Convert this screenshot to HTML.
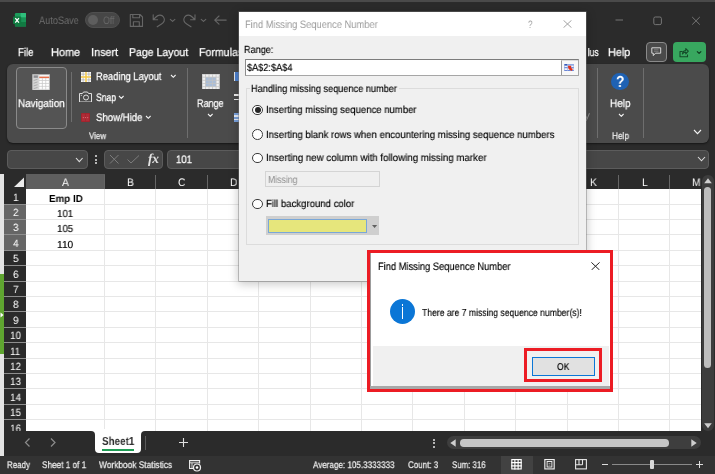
<!DOCTYPE html>
<html><head><meta charset="utf-8"><title>Find Missing Sequence Number</title>
<style>
*{box-sizing:border-box;margin:0;padding:0}
html,body{width:715px;height:474px;overflow:hidden;background:#2b2b2b}
body{position:relative;font-family:"Liberation Sans",sans-serif;color:#fff}
.a{position:absolute;display:block}
.t{position:absolute;white-space:nowrap;line-height:1;transform-origin:0 0;will-change:transform;text-rendering:geometricPrecision}
.w{-webkit-text-stroke:.25px currentColor}
.k{-webkit-text-stroke:.15px currentColor}
</style></head><body>
<div class="a" style="left:0px;top:0px;width:715px;height:1.8px;background:#4a4a4a"></div>
<svg class="a" style="left:12.900px;top:13.400px" width="13.4" height="13.6" viewBox="0 0 13.4 13.6">
 <rect x="1.9" y="0" width="11.5" height="13.6" rx="1.2" fill="#1d9c5c"/>
 <path d="M7.6 0H12.200A1.2 1.2 0 0 1 13.4 1.200V4.600H7.600Z" fill="#2fbf7c"/>
 <rect x="7.6" y="4.6" width="5.8" height="4.5" fill="#1a9457"/>
 <path d="M1.9 9.100H13.400V12.400A1.2 1.2 0 0 1 12.2 13.600H3.100A1.2 1.2 0 0 1 1.9 12.400Z" fill="#117a42"/>
 <rect x="0" y="3.6" width="8.2" height="7.5" rx=".8" fill="#0f7a40"/>
 <path d="M2.3 5.1 L5.9 9.6 M5.9 5.1 L2.3 9.6" stroke="#fff" stroke-width="1.3"/>
</svg>
<div class="t" style="left:39.40px;top:16px;font-size:10.8px;color:#6e6e6e;transform:scaleX(0.8498);">AutoSave</div>
<div class="a" style="left:84.6px;top:12.4px;width:35px;height:15.6px;border-radius:8px;background:#464646;border:1px solid #4f4f4f"></div>
<div class="a" style="left:88px;top:15.2px;width:10px;height:10px;border-radius:5px;background:#5e5e5e"></div>
<div class="t" style="left:102.60px;top:16px;font-size:10.8px;color:#6a6a6a;transform:scaleX(0.8024);">Off</div>
<svg class="a" style="left:128px;top:12px" width="102" height="17" viewBox="0 0 102 17" fill="none" stroke="#666" stroke-width="1.1" stroke-linecap="round" stroke-linejoin="round">
 <path d="M2.3 2.5 H12 L14.5 5 V14.4 H2.3 Z M4.8 2.5 V5.8 H11.6 V2.5 M5.4 14.4 V9.8 H11.3 V14.4"/>
 <path d="M25.2 2.7 V7.8 H29.6 M25.5 7.5 L28 5 C30 3 33.5 2 35.5 5 C37.5 8 36 10.5 33.5 12 L29.2 14.8"/>
 <path d="M42.3 7.3 L44.6 9.4 L46.9 7.3"/>
 <path d="M67 2.7 V7.8 H62.6 M66.7 7.5 L64.2 5 C62.2 3 58.7 2 56.7 5 C54.7 8 56.2 10.5 58.7 12 L63 14.8"/>
 <path d="M73.2 7.3 L75.5 9.4 L77.8 7.3"/>
 <path d="M86.7 8.1 H98.2 M91 4 L86.7 8.1 L91 12.2"/>
</svg>
<svg class="a" style="left:610px;top:10px" width="100" height="22" viewBox="0 0 100 22" fill="none" stroke="#767676" stroke-width="1">
 <path d="M5.5 10 H13"/>
 <rect x="43.8" y="7" width="7.6" height="7.6" rx="1.5"/>
 <path d="M82.2 7 L89.8 14.6 M89.8 7 L82.2 14.6"/>
</svg>
<div class="t w" style="left:17.60px;top:48px;font-size:11.3px;color:#fff;transform:scaleX(0.8458);">File</div>
<div class="t w" style="left:51.40px;top:48px;font-size:11.3px;color:#fff;transform:scaleX(0.9687);">Home</div>
<div class="t w" style="left:91.20px;top:48px;font-size:11.3px;color:#fff;transform:scaleX(0.9625);">Insert</div>
<div class="t w" style="left:129.40px;top:48px;font-size:11.3px;color:#fff;transform:scaleX(0.9329);">Page Layout</div>
<div class="t w" style="left:199.40px;top:48px;font-size:11.3px;color:#fff;transform:scaleX(0.9364);">Formulas</div>
<div class="t w" style="left:582.20px;top:48px;font-size:11.3px;color:#fff;transform:scaleX(0.7643);clip-path:inset(0 0 0 33%);">Plus</div>
<div class="t w" style="left:608.40px;top:48px;font-size:11.3px;color:#fff;transform:scaleX(0.9552);">Help</div>
<div class="a" style="left:646px;top:42px;width:21px;height:20px;border:1px solid #8a8a8a;border-radius:4px;background:#4a4a4a"></div>
<svg class="a" style="left:651px;top:46.800px" width="10.5" height="9.5" viewBox="0 0 10.5 9.5" fill="none" stroke="#e6e6e6" stroke-width=".900" stroke-linejoin="round"><path d="M.8 .8 H9.7 V6.2 H4.5 L2.3 8.6 V6.2 H.8 Z"/><path d="M3 2.800H7.500M3 4.300H7.5" stroke="#9a9a9a" stroke-width=".600"/></svg>
<div class="a" style="left:673.2px;top:42.1px;width:33px;height:19.8px;border-radius:4px;background:#38a75f"></div>
<svg class="a" style="left:679px;top:47px" width="24" height="11" viewBox="0 0 24 11" fill="none" stroke="#134a28" stroke-width="1.1" stroke-linejoin="round"><path d="M3.5 4.5 H1 V9.7 H8.5 V7.5 M3.5 7 C3.5 4.8 5.2 3.6 6.8 3.6 V1.5 L9.3 4.2 L6.8 6.8 V5.3 C5.3 5.3 4.3 5.8 3.5 7 Z"/><path d="M18 4.3 L20.1 6.4 L22.2 4.3" stroke-width="1.2" stroke="#0e3a1f"/></svg>
<div class="a" style="left:6.5px;top:64px;width:702.5px;height:79px;background:#4b4b4b;border-radius:6px;box-shadow:0 1px 2px rgba(0,0,0,.5)"></div>
<div class="a" style="left:16px;top:66.5px;width:50.8px;height:62px;border:1px solid #8a8a8a;border-radius:4px;background:#545454"></div>
<svg class="a" style="left:32px;top:73.800px" width="18.2" height="16.6" viewBox="0 0 18 16.5">
 <rect x="0" y="0" width="18" height="16.5" fill="#9c9c9c"/>
 <rect x=".8" y=".8" width="16.4" height="14.9" fill="#ececec"/>
 <rect x=".8" y=".8" width="5.7" height="14.9" fill="#d4d4d4"/>
 <rect x="1.6" y="1.4" width="4.2" height="2.4" fill="#8c8c90"/>
 <g stroke="#a8a8a8" stroke-width=".900"><path d="M1.6 6.500L5.5 5.200M1.6 9.200L5.5 7.900M1.6 11.900L5.5 10.600M1.6 14.600L5.5 13.3"/></g>
 <rect x="7" y="1.3" width="10" height="1.4" fill="#fafafa"/>
 <rect x="7" y="2.6" width="10" height="1.5" fill="#e8704a"/>
 <g stroke="#c9c9c9" stroke-width=".700"><path d="M6.8 6.400H17M6.8 9.300H17M6.8 12.200H17M10.2 4.200V15.500M13.6 4.200V15.500M6.8 1V15.5"/></g>
 <g fill="#fff"><rect x="7.4" y="4.6" width="2.3" height="1.4"/><rect x="10.8" y="4.6" width="2.3" height="1.4"/><rect x="14.2" y="4.6" width="2.4" height="1.4"/><rect x="7.4" y="7" width="2.3" height="1.8"/><rect x="10.8" y="7" width="2.3" height="1.8"/><rect x="14.2" y="7" width="2.4" height="1.8"/><rect x="7.4" y="9.9" width="2.3" height="1.8"/><rect x="10.8" y="9.9" width="2.3" height="1.8"/><rect x="14.2" y="9.9" width="2.4" height="1.8"/><rect x="7.4" y="12.8" width="2.3" height="1.8"/><rect x="10.8" y="12.8" width="2.3" height="1.8"/><rect x="14.2" y="12.8" width="2.4" height="1.8"/></g>
</svg>
<div class="t w" style="left:17.60px;top:99px;font-size:11px;color:#fff;transform:scaleX(0.9004);">Navigation</div>
<div class="a" style="left:70.5px;top:72px;width:1px;height:50px;background:#6e6e6e"></div>
<svg class="a" style="left:80.500px;top:71.500px" width="10" height="10" viewBox="0 0 11 11">
 <rect width="11" height="11" fill="#f5c842"/>
 <g fill="#fbfbfb"><rect x="0" y="0" width="4.7" height="4.7"/><rect x="6.3" y="0" width="4.7" height="4.7"/><rect x="0" y="6.3" width="4.7" height="4.7"/><rect x="6.3" y="6.3" width="4.7" height="4.7"/></g>
 <g stroke="#9c9c9c" stroke-width=".600"><path d="M2.350 0V4.700M0 2.350H4.700M8.650 0V4.700M6.3 2.350H11M2.350 6.300V11M0 8.650H4.700M8.650 6.300V11M6.3 8.650H11"/></g>
</svg>
<div class="t w" style="left:95.60px;top:72px;font-size:11px;color:#fff;transform:scaleX(0.8487);">Reading Layout</div>
<svg class="a" style="left:170.2px;top:74.35px" width="6.6" height="4.3" viewBox="0 0 6.6 4.3" fill="none" stroke="#f4f4f4" stroke-width="1.1"><path d="M1 1 L3.3 3.3 L5.6 1"/></svg>
<svg class="a" style="left:79px;top:90.500px" width="13" height="11.5" viewBox="0 0 13 11.5" fill="none" stroke="#dedede" stroke-width="1"><path d="M.5 2.5 H3.5 L4.5 1 H8.5 L9.5 2.5 H12.5 V11 H.5 Z"/><circle cx="7" cy="6.5" r="2.5"/><rect x="1.8" y="3.8" width="1" height="1" fill="#dedede" stroke="none"/></svg>
<div class="t w" style="left:95.60px;top:93px;font-size:10.8px;color:#fff;transform:scaleX(0.7929);">Snap</div>
<svg class="a" style="left:118.4px;top:94.85px" width="6.6" height="4.3" viewBox="0 0 6.6 4.3" fill="none" stroke="#f4f4f4" stroke-width="1.1"><path d="M1 1 L3.3 3.3 L5.6 1"/></svg>
<svg class="a" style="left:81px;top:113px" width="9" height="9" viewBox="0 0 10 10"><rect width="10" height="10" rx="1" fill="#a0242e"/><rect x="1" y="1" width="8" height="8" fill="#ae2c37"/><path d="M5 1V9" stroke="#98202a" stroke-width=".600"/><g fill="#d46a72"><rect x="2" y="4.5" width="1.2" height="1.2"/><rect x="4.4" y="4.5" width="1.2" height="1.2"/><rect x="6.8" y="4.5" width="1.2" height="1.2"/></g></svg>
<div class="t w" style="left:95.60px;top:113px;font-size:10.8px;color:#fff;transform:scaleX(0.8884);">Show/Hide</div>
<svg class="a" style="left:144.7px;top:115.35px" width="6.6" height="4.3" viewBox="0 0 6.6 4.3" fill="none" stroke="#f4f4f4" stroke-width="1.1"><path d="M1 1 L3.3 3.3 L5.6 1"/></svg>
<div class="t w" style="left:89.40px;top:132px;font-size:9.3px;color:#e8e8e8;transform:scaleX(0.8604);">View</div>
<div class="a" style="left:187px;top:68px;width:1px;height:70px;background:#6e6e6e"></div>
<svg class="a" style="left:202.400px;top:73.600px" width="17.6" height="15.8" viewBox="0 0 20 20" preserveAspectRatio="none">
 <rect width="20" height="20" fill="#f0f0f0"/>
 <rect x="4" y="4" width="12" height="12" fill="#a9bdd8"/>
 <g stroke="#c2c2c2" stroke-width=".900"><path d="M0 4H20M0 8H20M0 12H20M0 16H20M4 0V20M8 0V20M12 0V20M16 0V20M.4 0V20M19.6 0V20M0 .4H20M0 19.600H20"/></g>
</svg>
<div class="t w" style="left:197.40px;top:99px;font-size:11px;color:#fff;transform:scaleX(0.8206);">Range</div>
<svg class="a" style="left:206.7px;top:112.85px" width="6.6" height="4.3" viewBox="0 0 6.6 4.3" fill="none" stroke="#f4f4f4" stroke-width="1.1"><path d="M1 1 L3.3 3.3 L5.6 1"/></svg>
<div class="a" style="left:233.6px;top:72px;width:1.2px;height:8.8px;background:#e8e8e8"></div>
<div class="a" style="left:234.8px;top:72px;width:4px;height:8.8px;background:#4f83d2"></div>
<div class="a" style="left:234px;top:94.3px;width:5px;height:1.7px;background:#eee"></div>
<div class="a" style="left:234px;top:98.7px;width:5px;height:1.7px;background:#eee"></div>
<div class="a" style="left:233.6px;top:113px;width:5px;height:8.8px;background:#7aa2de"></div>
<div class="a" style="left:234px;top:115px;width:5px;height:1.5px;background:#e8eef8"></div>
<div class="a" style="left:234px;top:118.5px;width:5px;height:1.5px;background:#e8eef8"></div>
<div class="a" style="left:597px;top:68px;width:1px;height:70px;background:#6e6e6e"></div>
<div class="a" style="left:643px;top:68px;width:1px;height:70px;background:#6e6e6e"></div>
<div class="a" style="left:611.4px;top:72.8px;width:17.2px;height:17.2px;border-radius:50%;background:#1f62b4"></div>
<div class="t" style="left:615.80px;top:75px;font-size:16px;color:#fff;font-weight:bold;transform:scaleX(0.8595);">?</div>
<div class="t w" style="left:610.40px;top:99px;font-size:11px;color:#fff;transform:scaleX(0.9106);">Help</div>
<svg class="a" style="left:617.7px;top:112.85px" width="6.6" height="4.3" viewBox="0 0 6.6 4.3" fill="none" stroke="#f4f4f4" stroke-width="1.1"><path d="M1 1 L3.3 3.3 L5.6 1"/></svg>
<div class="t w" style="left:611.60px;top:132px;font-size:9.6px;color:#e8e8e8;transform:scaleX(0.8610);">Help</div>
<svg class="a" style="left:692.5px;top:129.4px" width="9" height="5.6" viewBox="0 0 9 5.6" fill="none" stroke="#f4f4f4" stroke-width="1.1"><path d="M1 1 L4.5 4.6 L8 1"/></svg>
<div class="t" style="left:584.00px;top:111px;font-size:11px;color:#909090;transform:scaleX(1.0909);">y</div>
<div class="a" style="left:6.5px;top:149.5px;width:81px;height:19px;border:1px solid #5c5c5c;border-radius:4px;background:#474747"></div>
<svg class="a" style="left:74.9px;top:157.4px" width="8.6" height="5.6" viewBox="0 0 8.6 5.6" fill="none" stroke="#ddd" stroke-width="1.1"><path d="M1 1 L4.3 4.6 L7.6 1"/></svg>
<div class="a" style="left:95px;top:155px;width:2px;height:2px;background:#e4e4e4;border-radius:1px"></div>
<div class="a" style="left:95px;top:158.6px;width:2px;height:2px;background:#e4e4e4;border-radius:1px"></div>
<div class="a" style="left:95px;top:162.2px;width:2px;height:2px;background:#e4e4e4;border-radius:1px"></div>
<div class="a" style="left:104px;top:149.5px;width:59px;height:19px;border:1px solid #5c5c5c;border-radius:4px;background:#474747"></div>
<svg class="a" style="left:108px;top:153px" width="34" height="13" viewBox="0 0 34 13" fill="none" stroke="#7c7c7c" stroke-width="1"><path d="M2 2 L10.5 10.5 M10.5 2 L2 10.5"/><path d="M19.5 6.5 L23 10 L31 2.5"/></svg>
<div class="t" style="left:147.800px;top:151.800px;font-family:'Liberation Serif',serif;font-style:italic;font-weight:bold;font-size:13.500px;color:#e4e4e4;letter-spacing:-.3px">fx</div>
<div class="a" style="left:166.5px;top:149.5px;width:542.5px;height:19px;border:1px solid #5c5c5c;border-radius:4px;background:#474747"></div>
<div class="t w" style="left:176.00px;top:155px;font-size:10.8px;color:#fff;transform:scaleX(0.8879);">101</div>
<svg class="a" style="left:696.8px;top:156.1px" width="9" height="5.8" viewBox="0 0 9 5.8" fill="none" stroke="#ddd" stroke-width="1.1"><path d="M1 1 L4.5 4.8 L8 1"/></svg>
<div class="a" style="left:0px;top:173.6px;width:4.4px;height:282.4px;background:#e4e4e4"></div>
<div class="a" style="left:0px;top:274px;width:4.4px;height:80px;background:#5fa530"></div>
<svg class="a" style="left:0;top:312px" width="4" height="6" viewBox="0 0 4 6"><path d="M0.5 0.500L3.5 3L0.5 5.500Z" fill="#fff"/></svg>
<div class="a" style="left:26px;top:189px;width:675px;height:241.5px;background:#fff"></div>
<div class="a" style="left:26px;top:204px;width:675px;height:1px;background:#e7e7e7"></div>
<div class="a" style="left:26px;top:219px;width:675px;height:1px;background:#e7e7e7"></div>
<div class="a" style="left:26px;top:234px;width:675px;height:1px;background:#e7e7e7"></div>
<div class="a" style="left:26px;top:250px;width:675px;height:1px;background:#e7e7e7"></div>
<div class="a" style="left:26px;top:265px;width:675px;height:1px;background:#e7e7e7"></div>
<div class="a" style="left:26px;top:281px;width:675px;height:1px;background:#e7e7e7"></div>
<div class="a" style="left:26px;top:296px;width:675px;height:1px;background:#e7e7e7"></div>
<div class="a" style="left:26px;top:311px;width:675px;height:1px;background:#e7e7e7"></div>
<div class="a" style="left:26px;top:327px;width:675px;height:1px;background:#e7e7e7"></div>
<div class="a" style="left:26px;top:342px;width:675px;height:1px;background:#e7e7e7"></div>
<div class="a" style="left:26px;top:358px;width:675px;height:1px;background:#e7e7e7"></div>
<div class="a" style="left:26px;top:373px;width:675px;height:1px;background:#e7e7e7"></div>
<div class="a" style="left:26px;top:388px;width:675px;height:1px;background:#e7e7e7"></div>
<div class="a" style="left:26px;top:404px;width:675px;height:1px;background:#e7e7e7"></div>
<div class="a" style="left:26px;top:419px;width:675px;height:1px;background:#e7e7e7"></div>
<div class="a" style="left:4.4px;top:173.6px;width:710.6px;height:15.4px;background:#2b2b2b"></div>
<div class="a" style="left:26px;top:173.6px;width:78.5px;height:15.4px;background:#5e5e5e"></div>
<div class="t" style="left:62.04px;top:178px;font-size:11px;color:#fff;transform:scaleX(0.9300);">A</div>
<div class="a" style="left:104px;top:189px;width:1px;height:241.5px;background:#e7e7e7"></div>
<div class="a" style="left:104px;top:174.5px;width:1px;height:14px;background:#666"></div>
<div class="t" style="left:126.99px;top:178px;font-size:11px;color:#fff;transform:scaleX(0.9300);">B</div>
<div class="a" style="left:155px;top:189px;width:1px;height:241.5px;background:#e7e7e7"></div>
<div class="a" style="left:155px;top:174.5px;width:1px;height:14px;background:#666"></div>
<div class="t" style="left:178.11px;top:178px;font-size:11px;color:#fff;transform:scaleX(0.9300);">C</div>
<div class="a" style="left:207px;top:189px;width:1px;height:241.5px;background:#e7e7e7"></div>
<div class="a" style="left:207px;top:174.5px;width:1px;height:14px;background:#666"></div>
<div class="t" style="left:229.51px;top:178px;font-size:11px;color:#fff;transform:scaleX(0.9300);">D</div>
<div class="a" style="left:258px;top:189px;width:1px;height:241.5px;background:#e7e7e7"></div>
<div class="a" style="left:258px;top:174.5px;width:1px;height:14px;background:#666"></div>
<div class="t" style="left:281.19px;top:178px;font-size:11px;color:#fff;transform:scaleX(0.9300);">E</div>
<div class="a" style="left:310px;top:189px;width:1px;height:241.5px;background:#e7e7e7"></div>
<div class="a" style="left:310px;top:174.5px;width:1px;height:14px;background:#666"></div>
<div class="t" style="left:332.88px;top:178px;font-size:11px;color:#fff;transform:scaleX(0.9300);">F</div>
<div class="a" style="left:361px;top:189px;width:1px;height:241.5px;background:#e7e7e7"></div>
<div class="a" style="left:361px;top:174.5px;width:1px;height:14px;background:#666"></div>
<div class="t" style="left:383.42px;top:178px;font-size:11px;color:#fff;transform:scaleX(0.9300);">G</div>
<div class="a" style="left:412px;top:189px;width:1px;height:241.5px;background:#e7e7e7"></div>
<div class="a" style="left:412px;top:174.5px;width:1px;height:14px;background:#666"></div>
<div class="t" style="left:435.11px;top:178px;font-size:11px;color:#fff;transform:scaleX(0.9300);">H</div>
<div class="a" style="left:464px;top:189px;width:1px;height:241.5px;background:#e7e7e7"></div>
<div class="a" style="left:464px;top:174.5px;width:1px;height:14px;background:#666"></div>
<div class="t" style="left:488.78px;top:178px;font-size:11px;color:#fff;transform:scaleX(0.9300);">I</div>
<div class="a" style="left:515px;top:189px;width:1px;height:241.5px;background:#e7e7e7"></div>
<div class="a" style="left:515px;top:174.5px;width:1px;height:14px;background:#666"></div>
<div class="t" style="left:539.04px;top:178px;font-size:11px;color:#fff;transform:scaleX(0.9300);">J</div>
<div class="a" style="left:567px;top:189px;width:1px;height:241.5px;background:#e7e7e7"></div>
<div class="a" style="left:567px;top:174.5px;width:1px;height:14px;background:#666"></div>
<div class="t" style="left:589.59px;top:178px;font-size:11px;color:#fff;transform:scaleX(0.9300);">K</div>
<div class="a" style="left:618px;top:189px;width:1px;height:241.5px;background:#e7e7e7"></div>
<div class="a" style="left:618px;top:174.5px;width:1px;height:14px;background:#666"></div>
<div class="t" style="left:641.56px;top:178px;font-size:11px;color:#fff;transform:scaleX(0.9300);">L</div>
<div class="a" style="left:669px;top:189px;width:1px;height:241.5px;background:#e7e7e7"></div>
<div class="a" style="left:669px;top:174.5px;width:1px;height:14px;background:#666"></div>
<div class="t" style="left:691.54px;top:178px;font-size:11px;color:#fff;transform:scaleX(0.9300);">M</div>
<svg class="a" style="left:13.600px;top:177px" width="10.5" height="10" viewBox="0 0 10.5 10"><path d="M10.5 0 V10 H0 Z" fill="#ececec"/></svg>
<div class="a" style="left:4.4px;top:189px;width:21.6px;height:241.5px;background:#8e8e8e"></div>
<div class="a" style="left:4.4px;top:189px;width:21.6px;height:15px;background:#2b2b2b"></div>
<div class="t" style="left:12.66px;top:193px;font-size:10.6px;color:#fff;transform:scaleX(0.9300);">1</div>
<div class="a" style="left:4.4px;top:205px;width:21.6px;height:14px;background:#666666"></div>
<div class="t" style="left:12.66px;top:208px;font-size:10.6px;color:#fff;transform:scaleX(0.9300);">2</div>
<div class="a" style="left:4.4px;top:220px;width:21.6px;height:14px;background:#666666"></div>
<div class="t" style="left:12.66px;top:223px;font-size:10.6px;color:#fff;transform:scaleX(0.9300);">3</div>
<div class="a" style="left:4.4px;top:235px;width:21.6px;height:15px;background:#666666"></div>
<div class="t" style="left:12.66px;top:239px;font-size:10.6px;color:#fff;transform:scaleX(0.9300);">4</div>
<div class="a" style="left:4.4px;top:251px;width:21.6px;height:14px;background:#2b2b2b"></div>
<div class="t" style="left:12.66px;top:254px;font-size:10.6px;color:#fff;transform:scaleX(0.9300);">5</div>
<div class="a" style="left:4.4px;top:266px;width:21.6px;height:15px;background:#2b2b2b"></div>
<div class="t" style="left:12.66px;top:270px;font-size:10.6px;color:#fff;transform:scaleX(0.9300);">6</div>
<div class="a" style="left:4.4px;top:282px;width:21.6px;height:14px;background:#2b2b2b"></div>
<div class="t" style="left:12.66px;top:285px;font-size:10.6px;color:#fff;transform:scaleX(0.9300);">7</div>
<div class="a" style="left:4.4px;top:297px;width:21.6px;height:14px;background:#2b2b2b"></div>
<div class="t" style="left:12.66px;top:300px;font-size:10.6px;color:#fff;transform:scaleX(0.9300);">8</div>
<div class="a" style="left:4.4px;top:312px;width:21.6px;height:15px;background:#2b2b2b"></div>
<div class="t" style="left:12.66px;top:316px;font-size:10.6px;color:#fff;transform:scaleX(0.9300);">9</div>
<div class="a" style="left:4.4px;top:328px;width:21.6px;height:14px;background:#2b2b2b"></div>
<div class="t" style="left:9.92px;top:331px;font-size:10.6px;color:#fff;transform:scaleX(0.9300);">10</div>
<div class="a" style="left:4.4px;top:343px;width:21.6px;height:15px;background:#2b2b2b"></div>
<div class="t" style="left:10.28px;top:347px;font-size:10.6px;color:#fff;transform:scaleX(0.9300);">11</div>
<div class="a" style="left:4.4px;top:359px;width:21.6px;height:14px;background:#2b2b2b"></div>
<div class="t" style="left:9.92px;top:362px;font-size:10.6px;color:#fff;transform:scaleX(0.9300);">12</div>
<div class="a" style="left:4.4px;top:374px;width:21.6px;height:14px;background:#2b2b2b"></div>
<div class="t" style="left:9.92px;top:377px;font-size:10.6px;color:#fff;transform:scaleX(0.9300);">13</div>
<div class="a" style="left:4.4px;top:389px;width:21.6px;height:15px;background:#2b2b2b"></div>
<div class="t" style="left:9.92px;top:393px;font-size:10.6px;color:#fff;transform:scaleX(0.9300);">14</div>
<div class="a" style="left:4.4px;top:405px;width:21.6px;height:14px;background:#2b2b2b"></div>
<div class="t" style="left:9.92px;top:408px;font-size:10.6px;color:#fff;transform:scaleX(0.9300);">15</div>
<div class="a" style="left:4.4px;top:420px;width:21.6px;height:10.5px;background:#2b2b2b"></div>
<div class="t" style="left:9.92px;top:424px;font-size:10.6px;color:#fff;transform:scaleX(0.9300);clip-path:inset(0 0 4.1px 0);">16</div>
<div class="t" style="left:48.60px;top:195px;font-size:10.2px;color:#000;font-weight:bold;transform:scaleX(0.9619);">Emp ID</div>
<div class="t k" style="left:57.40px;top:210px;font-size:10.2px;color:#000;transform:scaleX(0.9519);">101</div>
<div class="t k" style="left:57.40px;top:225px;font-size:10.2px;color:#000;transform:scaleX(0.9519);">105</div>
<div class="t k" style="left:57.40px;top:241px;font-size:10.2px;color:#000;transform:scaleX(0.9962);">110</div>
<div class="a" style="left:701px;top:173.6px;width:14px;height:256.9px;background:#2b2b2b"></div>
<div class="a" style="left:702px;top:174.6px;width:11.6px;height:256.4px;background:#3d3d3d;border-radius:5.800px"></div>
<div class="a" style="left:704.2px;top:187.4px;width:7px;height:181px;background:#bdbdbd;border-radius:3.500px"></div>
<svg class="a" style="left:703.500px;top:178px" width="8" height="5.5" viewBox="0 0 8 5.5"><path d="M4 0.2 L7.8 5.2 H0.2 Z" fill="#cfcfcf"/></svg>
<svg class="a" style="left:703.500px;top:423px" width="8" height="5.5" viewBox="0 0 8 5.5"><path d="M4 5.3 L7.8 0.3 H0.2 Z" fill="#cfcfcf"/></svg>
<div class="a" style="left:88px;top:429px;width:60px;height:8px;background:#fff"></div>
<div class="a" style="left:141.4px;top:430.5px;width:573.6px;height:25.5px;background:#2b2b2b;border-radius:4px 0 0 0"></div>
<div class="a" style="left:4.4px;top:430.5px;width:90.6px;height:25.5px;background:#2b2b2b;border-radius:0 4px 0 0"></div>
<div class="a" style="left:90px;top:450px;width:56px;height:6px;background:#2b2b2b"></div>
<svg class="a" style="left:22px;top:436px" width="40" height="13" viewBox="0 0 40 13" fill="none" stroke="#8c8c8c" stroke-width="1.2"><path d="M7.5 2.5 L3.5 6.5 L7.5 10.5 M29 2.5 L33 6.5 L29 10.5"/></svg>
<div class="a" style="left:95px;top:429px;width:46.4px;height:23.6px;background:#fff;border-radius:0 0 4px 4px"></div>
<div class="t" style="left:101.60px;top:436px;font-size:11.6px;color:#303030;font-weight:bold;transform:scaleX(0.8517);">Sheet1</div>
<div class="a" style="left:101.6px;top:449px;width:32.8px;height:1.6px;background:#1f9d55"></div>
<div class="a" style="left:144.6px;top:436px;width:1px;height:14px;background:#5a5a5a"></div>
<svg class="a" style="left:179px;top:438px" width="9" height="9" viewBox="0 0 9 9" stroke="#e0e0e0" stroke-width="1.1"><path d="M4.5 0V9M0 4.500H9"/></svg>
<div class="a" style="left:433px;top:438.6px;width:2px;height:2px;background:#e4e4e4;border-radius:1px"></div>
<div class="a" style="left:433px;top:442.4px;width:2px;height:2px;background:#e4e4e4;border-radius:1px"></div>
<div class="a" style="left:433px;top:446px;width:2px;height:2px;background:#e4e4e4;border-radius:1px"></div>
<div class="a" style="left:447px;top:436px;width:254px;height:13.4px;border-radius:6.700px;background:#3e3e3e"></div>
<div class="a" style="left:460px;top:439px;width:208.6px;height:7.6px;border-radius:3.800px;background:#c6c6c6"></div>
<svg class="a" style="left:450.400px;top:439px" width="6" height="8" viewBox="0 0 6 8"><path d="M0.3 4 L5.7 0.3 V7.7 Z" fill="#cfcfcf"/></svg>
<svg class="a" style="left:691.400px;top:439px" width="6" height="8" viewBox="0 0 6 8"><path d="M5.7 4 L0.3 0.3 V7.7 Z" fill="#cfcfcf"/></svg>
<div class="a" style="left:0px;top:456px;width:715px;height:18px;background:#333333"></div>
<div class="t w" style="left:6.60px;top:461px;font-size:9.6px;color:#ececec;transform:scaleX(0.8288);">Ready</div>
<div class="t w" style="left:42.40px;top:461px;font-size:9.6px;color:#ececec;transform:scaleX(0.8537);">Sheet 1 of 1</div>
<div class="t w" style="left:99.40px;top:461px;font-size:9.6px;color:#ececec;transform:scaleX(0.8702);">Workbook Statistics</div>
<svg class="a" style="left:189px;top:459.500px" width="13" height="12" viewBox="0 0 13 12" fill="none" stroke="#f0f0f0" stroke-width="1.1"><path d="M5 8.500H.6V.6H10.600V3.5"/><path d="M.6 2.800H10.600M3 2.800V8.5" stroke-width=".900"/><circle cx="8" cy="7.5" r="3.5" fill="#333333" stroke-width="1.2"/><circle cx="8" cy="7.5" r="1.3" fill="#fff" stroke="none"/></svg>
<div class="t w" style="left:313.00px;top:461px;font-size:9.6px;color:#ececec;transform:scaleX(0.8414);">Average: 105.3333333</div>
<div class="t w" style="left:408.40px;top:461px;font-size:9.6px;color:#ececec;transform:scaleX(0.8322);">Count: 3</div>
<div class="t w" style="left:452.00px;top:461px;font-size:9.6px;color:#ececec;transform:scaleX(0.8177);">Sum: 316</div>
<div class="a" style="left:500.8px;top:456px;width:32.4px;height:18px;background:#424242"></div>
<svg class="a" style="left:511px;top:459px" width="11" height="10.5" viewBox="0 0 11 11" fill="none" stroke="#fff" stroke-width="1.2"><rect x=".600" y=".600" width="9.8" height="9.8"/><path d="M3.8 0V11M7.2 0V11M0 3.800H11M0 7.200H11"/></svg>
<svg class="a" style="left:543.500px;top:459px" width="11" height="10.5" viewBox="0 0 11 11" fill="none" stroke="#f0f0f0" stroke-width="1.2"><rect x=".600" y=".600" width="9.8" height="9.8"/><rect x="3" y="2.6" width="5" height="5.8" stroke-width="1"/><path d="M4.5 4.600H6.500M4.5 6.400H6.5" stroke-width=".600"/></svg>
<svg class="a" style="left:575px;top:459px" width="12" height="10.5" viewBox="0 0 12 10.5" fill="none" stroke="#e6e6e6" stroke-width="1.1"><rect x=".600" y=".600" width="10.8" height="9.3"/><path d="M4 0V5.800M7.5 0V5.800M.6 5.800H7.5"/></svg>
<div class="a" style="left:602px;top:464.2px;width:6px;height:1px;background:#ddd"></div>
<div class="a" style="left:612px;top:464.2px;width:80px;height:1px;background:#8a8a8a"></div>
<div class="a" style="left:650.4px;top:460px;width:4px;height:9px;background:#d8d8d8;border-radius:1px"></div>
<svg class="a" style="left:696px;top:461.200px" width="7" height="7" viewBox="0 0 7 7" stroke="#ddd" stroke-width="1"><path d="M3.5 0V7M0 3.500H7"/></svg>
<div class="a" style="left:238.5px;top:12px;width:347.9px;height:268.6px;background:#f0f0f0;box-shadow:0 0 0 .6px rgba(120,120,120,.7),0 2px 9px 1px rgba(0,0,0,.22)"></div>
<div class="a" style="left:238.5px;top:12px;width:347.9px;height:23.7px;background:#fff"></div>
<div class="t" style="left:244.60px;top:20px;font-size:10.8px;color:#9a9a9a;transform:scaleX(0.8642);">Find Missing Sequence Number</div>
<div class="t" style="left:528.00px;top:20px;font-size:10.8px;color:#9a9a9a;transform:scaleX(0.7325);">?</div>
<svg class="a" style="left:562.500px;top:20px" width="9" height="8" viewBox="0 0 9 8" stroke="#9a9a9a" stroke-width=".900"><path d="M.5 .3 L8.5 7.7 M8.5 .3 L.5 7.7"/></svg>
<div class="t k" style="left:243.60px;top:46px;font-size:10.3px;color:#000;transform:scaleX(0.8852);">Range:</div>
<div class="a" style="left:245px;top:59px;width:333.6px;height:16.6px;background:#fff;border:1px solid #a6a6a6;border-top-color:#7c7c7c;border-left-color:#8c8c8c"></div>
<div class="t k" style="left:247.00px;top:64px;font-size:10.3px;color:#000;transform:scaleX(0.8907);">$A$2:$A$4</div>
<div class="a" style="left:561px;top:60px;width:16.6px;height:14.6px;background:#f8f8f8;border-left:1px solid #9a9a9a;border-top:1px solid #dcdcdc"></div>
<svg class="a" style="left:564px;top:64px" width="10.2" height="7.2" viewBox="0 0 10 7"><rect width="10" height="7" fill="#f4f6fc"/><rect width="3.5" height="1.6" fill="#3558b8"/><rect x="3.5" width="6.5" height="1.6" fill="#8ea8e4"/><g stroke="#4668cc" stroke-width=".900"><path d="M0 3.600H10M0 6.500H10"/></g><g stroke="#9ab0e6" stroke-width=".700"><path d="M.4 0V7M9.6 0V7M3.4 1.600V7M6.7 1.600V7"/></g><path d="M3.8 1.8 H7 V3.8 L8.8 5 L7.2 6.9 L5.6 5.6 L4.6 5.2 Z" fill="#e0301c"/></svg>
<div class="a" style="left:245.6px;top:88.4px;width:333px;height:157px;border:1px solid #dcdcdc"></div>
<div class="a" style="left:249.5px;top:84px;width:149.5px;height:10px;background:#f0f0f0"></div>
<div class="t k" style="left:251.00px;top:85px;font-size:10.3px;color:#000;transform:scaleX(0.8916);">Handling missing sequence number</div>
<div class="a" style="left:252.3px;top:104.5px;width:10.8px;height:10.8px;border:1px solid #3c3c3c;border-radius:50%;background:#fff"></div>
<div class="a" style="left:254.7px;top:106.9px;width:6px;height:6px;border-radius:50%;background:#262626"></div>
<div class="t k" style="left:266.00px;top:106px;font-size:10.3px;color:#000;transform:scaleX(0.9262);">Inserting missing sequence number</div>
<div class="a" style="left:252.3px;top:128.8px;width:10.8px;height:10.8px;border:1px solid #3c3c3c;border-radius:50%;background:#fff"></div>
<div class="t k" style="left:266.00px;top:131px;font-size:10.3px;color:#000;transform:scaleX(0.9317);">Inserting blank rows when encountering missing sequence numbers</div>
<div class="a" style="left:252.3px;top:152.6px;width:10.8px;height:10.8px;border:1px solid #3c3c3c;border-radius:50%;background:#fff"></div>
<div class="t k" style="left:266.00px;top:154px;font-size:10.3px;color:#000;transform:scaleX(0.9422);">Inserting new column with following missing marker</div>
<div class="a" style="left:265px;top:171px;width:115px;height:16.4px;border:1px solid #d4d4d4;background:#efefef"></div>
<div class="t" style="left:267.60px;top:176px;font-size:10.3px;color:#8c8c8c;transform:scaleX(0.8421);">Missing</div>
<div class="a" style="left:252.3px;top:198.6px;width:10.8px;height:10.8px;border:1px solid #3c3c3c;border-radius:50%;background:#fff"></div>
<div class="t k" style="left:265.60px;top:200px;font-size:10.3px;color:#000;transform:scaleX(0.9302);">Fill background color</div>
<div class="a" style="left:266px;top:216.3px;width:113.4px;height:19px;background:#cfcfcf"></div>
<div class="a" style="left:268.4px;top:219.2px;width:99px;height:13.6px;background:#e6e67c;border:1px solid #7aa7d8"></div>
<svg class="a" style="left:372.400px;top:224.500px" width="5.2" height="3" viewBox="0 0 5.2 3"><path d="M0 0H5.200L2.6 3Z" fill="#606060"/></svg>
<div class="a" style="left:367.2px;top:250.3px;width:246.1px;height:142.2px;background:#ec1c24"></div>
<div class="a" style="left:370.2px;top:253.3px;width:240.1px;height:136.2px;background:#fff"></div>
<div class="a" style="left:370.2px;top:253.3px;width:1.3px;height:136.2px;background:#9c9c9c"></div>
<div class="a" style="left:372.7px;top:345.7px;width:235.9px;height:40.6px;background:#f0f0f0"></div>
<div class="a" style="left:370.2px;top:386.3px;width:240.1px;height:2.5px;background:#a8a8a8"></div>
<div class="t k" style="left:378.00px;top:262px;font-size:10.8px;color:#000;transform:scaleX(0.8629);">Find Missing Sequence Number</div>
<svg class="a" style="left:591.400px;top:261.800px" width="9" height="8.5" viewBox="0 0 9 8.5" stroke="#222" stroke-width="1"><path d="M.4 .4 L8.6 8.1 M8.6 .4 L.4 8.1"/></svg>
<div class="a" style="left:390px;top:299px;width:25px;height:25px;border-radius:50%;background:#0b76d6"></div>
<div class="a" style="left:401.9px;top:304px;width:1.3px;height:1.8px;background:#fff"></div>
<div class="a" style="left:401.9px;top:307.4px;width:1.3px;height:11.4px;background:#fff"></div>
<div class="t k" style="left:422.40px;top:309px;font-size:10.2px;color:#000;transform:scaleX(0.8450);">There are 7 missing sequence number(s)!</div>
<div class="a" style="left:524px;top:348.2px;width:77.6px;height:33.6px;border:3px solid #ec1c24"></div>
<div class="a" style="left:531.6px;top:356.5px;width:63.1px;height:19.3px;border:1.600px solid #0b76d6;background:#e1e1e1"></div>
<div class="t k" style="left:556.60px;top:363px;font-size:9.9px;color:#000;transform:scaleX(0.8669);">OK</div>
</body></html>
